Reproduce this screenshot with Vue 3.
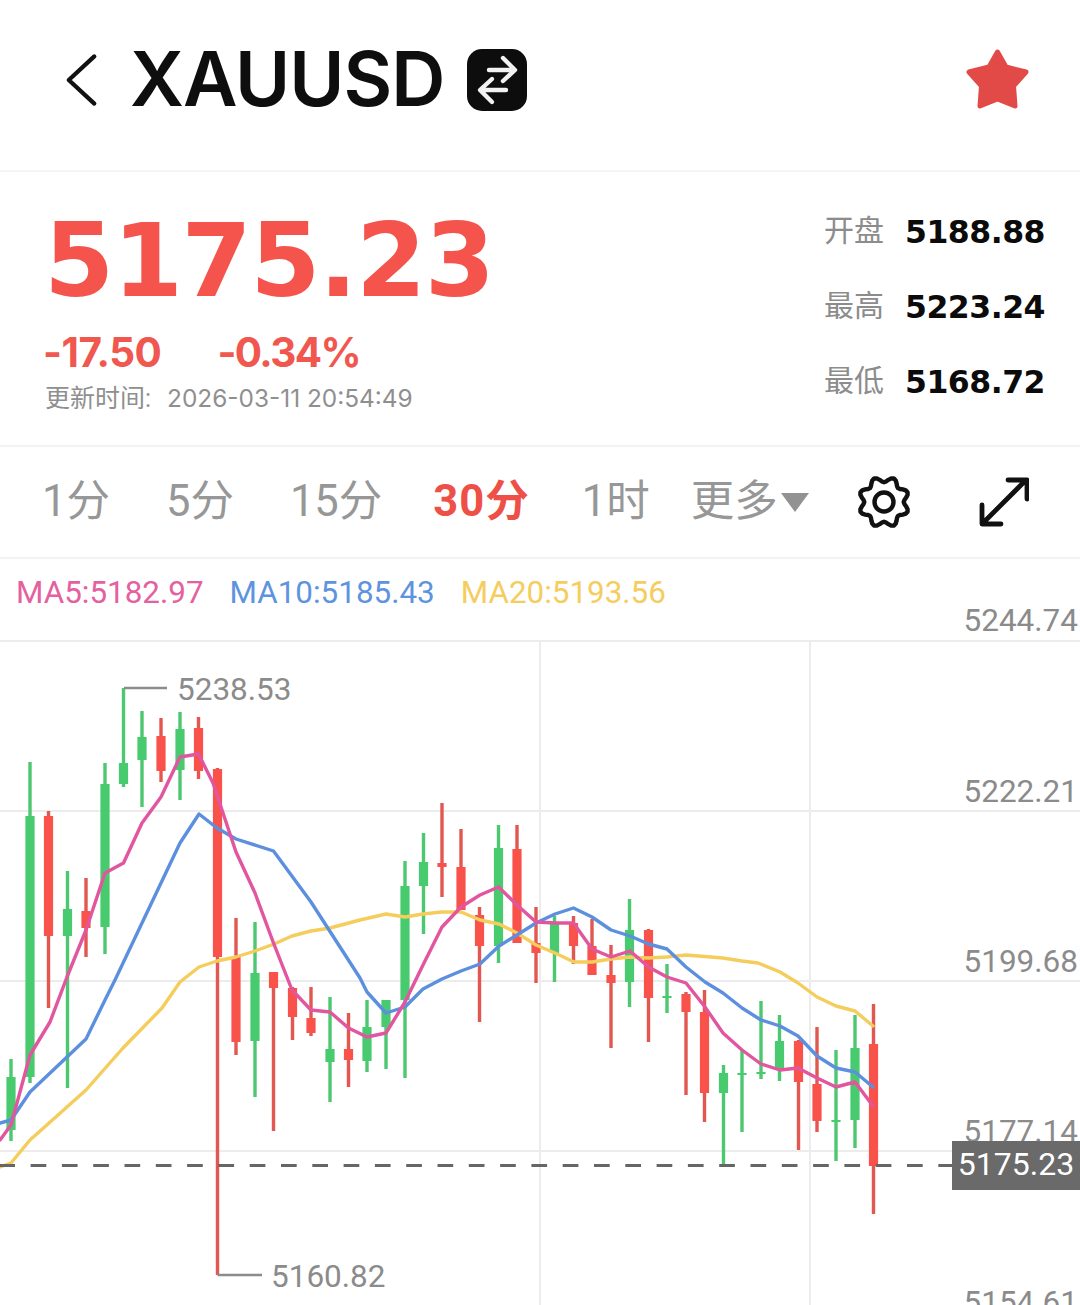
<template>
  <div class="page">
    <header class="top">
      <svg class="back" viewBox="0 0 36 56" fill="none" stroke="#111" stroke-width="4.5" stroke-linecap="round" stroke-linejoin="round">
        <path d="M31 3 L4 28 L31 53" />
      </svg>
      <h1 class="symbol">XAUUSD</h1>
      <svg class="swap" viewBox="0 0 60 62">
        <rect x="0" y="0" width="60" height="62" rx="15" fill="#0d0d0d" />
        <g fill="none" stroke="#f2f2f2" stroke-width="4.4" stroke-linecap="round" stroke-linejoin="round">
          <path d="M22 21 H47 M36 9 L48 21 L36 32" />
          <path d="M39 41 H14 M25 30 L13 41 L25 53" />
        </g>
      </svg>
      <svg class="star" viewBox="0 0 64 62">
        <path d="M31.5 3 L40 18 L60 23 L47.5 37 L49 57 L31.5 50 L14 57 L15.5 37 L3 23 L23 18 Z" fill="#e24a48" stroke="#e24a48" stroke-width="5" stroke-linejoin="round" />
      </svg>
    </header>

    <section class="quote">
      <div class="quote-left">
        <div class="price">5175.23</div>
        <div class="changes">
          <span class="chg">-17.50</span>
          <span class="pct">-0.34%</span>
        </div>
        <div class="updated">更新时间:<span class="stamp">2026-03-11 20:54:49</span></div>
      </div>
      <ul class="ohl">
        <li v-for="row in ohl" :key="row.label">
          <span class="ohl-label">{{ row.label }}</span>
          <span class="ohl-value">{{ row.value }}</span>
        </li>
      </ul>
    </section>

    <nav class="tabs">
      <span v-for="t in tabs" :key="t" class="tab" :class="{ active: t === '30分' }">{{ t }}</span>
      <span class="tab more">更多<i class="caret"></i></span>
      <svg class="gear" viewBox="0 0 56 56" fill="none" stroke="#111" stroke-width="4.4" stroke-linejoin="round">
        <path :d="gearPath" />
        <circle cx="28" cy="28" r="9.5" />
      </svg>
      <svg class="expand" viewBox="0 0 50 50" fill="none" stroke="#111" stroke-width="4.8" stroke-linecap="round" stroke-linejoin="round">
        <path d="M5 45 L45 5 M29 3 H48 V22 M3 28 V47 H22" />
      </svg>
    </nav>

    <div class="legend">
      <span class="ma5">MA5:5182.97</span>
      <span class="ma10">MA10:5185.43</span>
      <span class="ma20">MA20:5193.56</span>
    </div>

    <svg class="chart" viewBox="0 640 1080 665" width="1080" height="665">
      <g stroke="#ececec" stroke-width="2">
        <line v-for="y in [641, 811, 981, 1151]" :key="y" x1="0" x2="1080" :y1="y" :y2="y" />
        <line v-for="x in [540, 810]" :key="x" :x1="x" :x2="x" y1="640" y2="1305" />
      </g>

      <g class="axis">
        <text v-for="a in axis" :key="a.v" x="1078" :y="a.y" text-anchor="end">{{ a.v }}</text>
      </g>

      <g v-for="c in candles" :key="c.x">
        <line :x1="c.x" :x2="c.x" :y1="c.top" :y2="c.bot" :stroke="c.up ? '#4dc870' : '#e2574f'" stroke-width="3.4" />
        <rect :x="c.x - 4.6" :y="c.open" width="9.2" :height="c.close - c.open" :fill="c.up ? '#48cb6e' : '#f8524a'" rx="0.5" />
      </g>

      <polyline :points="ma20" class="ma" stroke="#f5cd5c" />
      <polyline :points="ma10" class="ma" stroke="#5d8fdf" />
      <polyline :points="ma5" class="ma" stroke="#e2559f" />

      <line x1="0" x2="952" y1="1165.5" y2="1165.5" stroke="#666" stroke-width="3.2" stroke-dasharray="15.7 15.6" stroke-dashoffset="0.7" />
      <rect x="952" y="1141" width="128" height="49" fill="#6a6a6a" />
      <text x="1016" y="1175" text-anchor="middle" class="last">5175.23</text>

      <path d="M124 688 H167" stroke="#8c8c8c" stroke-width="2.4" fill="none" />
      <text x="177" y="700" class="ext">5238.53</text>
      <path d="M217.5 1275 H262" stroke="#8c8c8c" stroke-width="2.4" fill="none" />
      <text x="271" y="1287" class="ext">5160.82</text>
    </svg>
  </div>
</template>

<script setup>
const ohl = [
  { label: '开盘', value: '5188.88' },
  { label: '最高', value: '5223.24' },
  { label: '最低', value: '5168.72' }
]

const tabs = ['1分', '5分', '15分', '30分', '1时']

const axis = [
  { v: '5244.74', y: 631 },
  { v: '5222.21', y: 802 },
  { v: '5199.68', y: 972 },
  { v: '5177.14', y: 1142 },
  { v: '5154.61', y: 1313 }
]

// x, green?, wick top, wick bottom, body top, body bottom (page pixels)
const raw = [
  [11, 1, 1059, 1141, 1077, 1130], [30, 1, 762, 1083, 816, 1077], [48.5, 0, 811, 1008, 816, 936],
  [67.5, 1, 871, 1088, 909, 936], [86, 0, 878, 957, 911, 928], [105, 1, 763, 954, 784, 927],
  [123.5, 1, 688, 787, 763, 784], [142, 1, 711, 807, 737, 760], [161, 0, 718, 782, 736, 771],
  [180, 1, 712, 800, 729, 770], [198.5, 0, 717, 779, 728, 771], [217.5, 0, 768, 1275, 769, 957],
  [236, 0, 918, 1055, 957, 1042], [255, 1, 922, 1097, 973, 1041], [273.5, 0, 972, 1131, 972, 988],
  [292.5, 0, 987, 1040, 988, 1017], [311, 0, 987, 1036, 1018, 1033], [330, 1, 997, 1102, 1049, 1062],
  [348.5, 0, 1013, 1087, 1049, 1060], [367, 1, 1000, 1072, 1027, 1061], [386, 1, 1000, 1069, 1000, 1027],
  [405, 1, 861, 1078, 886, 1000], [423.5, 1, 833, 934, 862, 886], [442, 0, 803, 897, 863, 867],
  [461, 0, 829, 910, 867, 910], [479.5, 0, 907, 1022, 915, 946], [498.5, 1, 825, 963, 848, 946],
  [517, 0, 825, 943, 849, 943], [536, 0, 907, 983, 943, 953], [554.5, 1, 916, 982, 923, 953],
  [573.5, 0, 916, 964, 923, 946], [592, 0, 919, 975, 946, 975], [611, 0, 945, 1048, 975, 983],
  [629.5, 1, 899, 1007, 930, 982], [648.5, 0, 929, 1042, 930, 998], [667, 1, 964, 1013, 996, 998],
  [686, 0, 992, 1095, 994, 1012], [704.5, 0, 990, 1122, 1012, 1093], [723.5, 1, 1065, 1165, 1073, 1093],
  [742, 1, 1050, 1132, 1073, 1075], [761, 1, 1001, 1079, 1072, 1074], [779.5, 1, 1015, 1081, 1041, 1068],
  [798.5, 0, 1040, 1150, 1041, 1082], [817, 0, 1027, 1132, 1084, 1121], [836, 1, 1050, 1161, 1120, 1122],
  [855, 1, 1015, 1148, 1048, 1120], [873.5, 0, 1004, 1214, 1044, 1166]
]
const candles = raw.map(([x, up, top, bot, open, close]) => ({ x, up, top, bot, open, close }))

const ma5 = '0,1140 11,1125 30,1055 50,1022 67,977 86,930 105,873 123.5,863 142,823 161,797 180,757 198.5,754 213,783 236,852 255,893 273.5,943 292,990 311,1010 330,1012 348.5,1028 367,1037 386,1033 405,1002 423,965 442,927 461,907 480,895 498.5,887 517,905 536,922 555,923 573.5,923 592,949 611,957 630,951 648.5,967 667,977 686,983 705,1007 723,1033 742,1050 761,1064 780,1070 798,1068 817,1078 836,1087 855,1082 873,1106'
const ma10 = '0,1123 11,1120 30,1092 67,1057 86,1039 105,1000 115,980 142,923 180,843 199,814 217,828 236,839 273.5,851 311,902 360,978 367,992 386,1013 405,1007 423,989 442,979 461,971 480,964 499,946 517,935 536,923 555,914 573.5,908 592,917 611,930 630,936 648.5,944 667,949 686,967 705,982 723,993 742,1008 761,1020 780,1026 798,1036 817,1056 836,1068 855,1072 873,1087'
const ma20 = '0,1167 11,1163 30,1140 86,1090 123,1048 162,1008 180,982 199,967 217,961 236,957 255,951 274,944 292,936 311,931 330,928 360,920 386,914 405,917 423,914 442,912 461,912 480,920 499,924 517,933 536,945 555,953 574,962 592,962 611,959 630,957 648,958 667,957 686,955 723,958 742,961 758,963 780,972 798,983 817,997 836,1006 855,1011 873,1026'

// eight-lobed cog outline, dip at the top
const gearPath = (() => {
  const n = 8
  const cx = 28
  const cy = 28
  let d = ''
  for (let i = 0; i < n * 8; i++) {
    const a = (i / (n * 8)) * Math.PI * 2 - Math.PI / 2
    const r = 22.6 - 2.9 * Math.cos(n * a)
    const x = cx + r * Math.cos(a)
    const y = cy + r * Math.sin(a)
    d += (i ? 'L' : 'M') + x.toFixed(2) + ' ' + y.toFixed(2) + ' '
  }
  return d + 'Z'
})()
</script>

<style>
html, body { background: #fff; }
</style>

<style scoped>
.page {
  width: 1080px;
  height: 1305px;
  overflow: hidden;
  background: #fff;
  font-family: Roboto, "Noto Sans CJK SC", sans-serif;
}
.top {
  display: flex;
  align-items: center;
  height: 172px;
  padding: 0 50px 10px 65px;
  box-sizing: border-box;
  border-bottom: 2px solid #f5f5f5;
}
.back { width: 34px; height: 54px; }
.symbol {
  margin: -4px 0 0 31px;
  font-family: Inter, sans-serif;
  font-size: 75px;
  line-height: 1;
  font-weight: 600;
  letter-spacing: -1px;
  color: #0e0e0e;
}
.swap { width: 60px; height: 62px; margin-left: 23px; }
.star { width: 64px; height: 62px; margin-left: auto; }

.quote {
  display: flex;
  justify-content: space-between;
  height: 275px;
  box-sizing: border-box;
  padding: 33px 35px 0 45px;
  border-bottom: 2px solid #f3f3f3;
}
.price {
  font-family: "DejaVu Sans", sans-serif;
  font-size: 101px;
  font-weight: 700;
  line-height: 112px;
  letter-spacing: -1.5px;
  margin-left: -1px;
  color: #f5544c;
}
.changes {
  display: flex;
  gap: 56px;
  margin-top: 12px;
  margin-left: -2px;
  font-family: Inter, sans-serif;
  font-size: 40.5px;
  font-weight: 700;
  line-height: 48px;
  color: #f0574e;
}
.chg { letter-spacing: -0.5px; }
.pct { letter-spacing: -1.6px; }
.updated {
  margin-top: 5px;
  font-size: 25px;
  line-height: 32px;
  color: #8f8f8f;
}
.stamp {
  margin-left: 16px;
  font-family: Inter, sans-serif;
  font-size: 24.4px;
}
.ohl {
  list-style: none;
  margin: 4px 0 0;
  padding: 0;
  display: flex;
  flex-direction: column;
  gap: 35px;
}
.ohl li {
  display: flex;
  align-items: center;
  gap: 21px;
  height: 40px;
}
.ohl-label { font-size: 30px; color: #8c8c8c; margin-bottom: 2px; }
.ohl-value {
  font-family: "DejaVu Sans", sans-serif;
  font-size: 31.5px;
  font-weight: 700;
  letter-spacing: -0.5px;
  margin-top: 5px;
  color: #0b0b0b;
}

.tabs {
  display: flex;
  align-items: center;
  gap: 56px;
  height: 112px;
  padding-left: 42px;
  box-sizing: border-box;
  border-bottom: 2px solid #f3f3f3;
}
.tab { font-size: 43.5px; color: #979797; line-height: 1; }
.tab.active {
  margin-left: -5px;
  margin-right: -4px;
  letter-spacing: 1px;
  color: #ee5048;
  font-weight: 700;
}
.more {
  display: flex;
  align-items: center;
  margin-left: -15px;
}
.caret {
  display: inline-block;
  width: 0;
  height: 0;
  margin-left: 3px;
  border-left: 14px solid transparent;
  border-right: 14px solid transparent;
  border-top: 19px solid #929292;
}
.gear { width: 56px; height: 56px; margin-left: -9px; }
.expand { width: 50px; height: 50px; margin-left: 11px; }

.legend {
  display: flex;
  gap: 26px;
  height: 81px;
  padding: 16px 0 0 16px;
  box-sizing: border-box;
  font-size: 31.4px;
  line-height: 36px;
}
.ma5 { color: #e5609f; }
.ma10 { color: #5d93df; }
.ma20 { color: #f5cd5e; }

.chart { display: block; overflow: visible; }
.axis text { font-size: 31.5px; fill: #8b8b8b; }
.ext { font-size: 31.5px; fill: #8b8b8b; }
.last { font-size: 32px; fill: #fff; }
.ma {
  fill: none;
  stroke-width: 3.4;
  stroke-linejoin: round;
  stroke-linecap: round;
}
</style>
